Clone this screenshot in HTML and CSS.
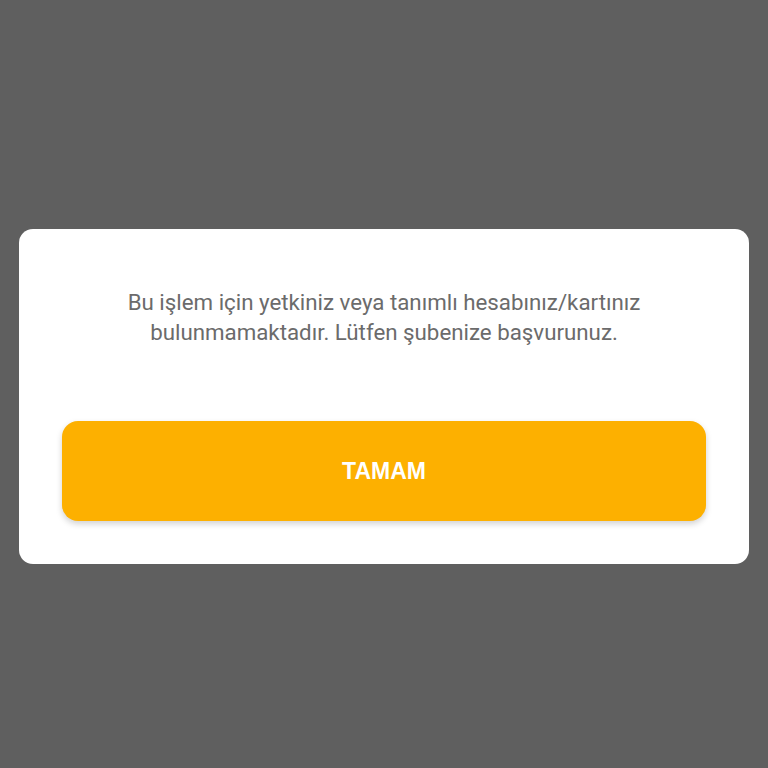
FILE: index.html
```html
<!DOCTYPE html>
<html lang="tr">
<head>
  <meta charset="UTF-8">
  <meta name="viewport" content="width=device-width, initial-scale=1.0">
  <title>Uyarı</title>
  <link rel="stylesheet" href="styles.css">
</head>
<body>

<div class="dialog">
  <p class="message">Bu işlem için yetkiniz veya tanımlı hesabınız/kartınız bulunmamaktadır. Lütfen şubenize başvurunuz.</p>
  <button class="ok-button">TAMAM</button>
</div>

</body>
</html>
```

FILE: styles.css
```css
body {
  margin: 0;
  height: 768px;
  background-color: #5f5f5f;
  font-family: Roboto, "Noto Sans", sans-serif;
  padding-top: 229px;
  box-sizing: border-box;
}
.dialog {
  margin: 0 19px;
  padding: 58px 43px 43px;
  border-radius: 14px;
  background-color: white;
  display: flex;
  flex-direction: column;
  align-items: stretch;
}
.message {
  margin: 0 0 74px;
  padding: 0 30px;
  font-size: 22.3px;
  line-height: 30px;
  color: #6b6b6b;
  text-align: center;
}
.ok-button {
  height: 100px;
  border: none;
  border-radius: 16px;
  background-color: #fdb000;
  color: white;
  font-family: "Liberation Sans", Arial, sans-serif;
  font-weight: bold;
  font-size: 23px;
  box-shadow: 0 3px 6px rgba(0, 0, 0, 0.18);
  cursor: pointer;
}
```
